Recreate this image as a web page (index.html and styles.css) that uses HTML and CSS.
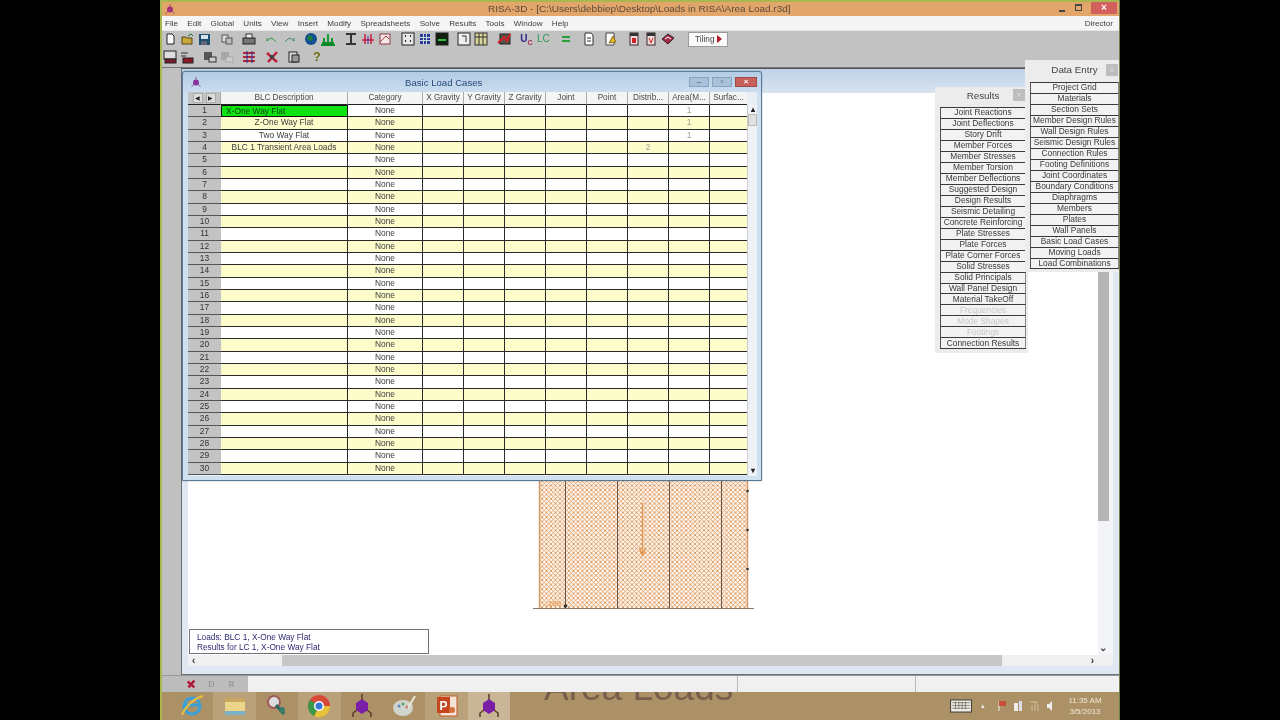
FILE: index.html
```html
<!DOCTYPE html>
<html lang="en">
<head>
<meta charset="utf-8">
<title>RISA-3D</title>
<link rel="stylesheet" href="styles.css">
</head>
<body>
<div class="screen">
  <header class="titlebar">
    <svg class="app-icon" viewBox="0 0 12 12"><circle cx="6" cy="6.5" r="3" fill="#a3307a"/><path d="M6 1v3M1.500 11l2.500-3M10.500 11l-2.500-3" stroke="#a3506a" fill="none"/></svg>
    <span class="title-text">RISA-3D - [C:\Users\debbiep\Desktop\Loads in RISA\Area Load.r3d]</span>
    <div class="win-controls">
      <span class="wc-min"></span>
      <span class="wc-max"></span>
      <span class="wc-close">×</span>
    </div>
  </header>

  <nav class="menubar">
    <span>File</span><span>Edit</span><span>Global</span><span>Units</span><span>View</span><span>Insert</span><span>Modify</span><span>Spreadsheets</span><span>Solve</span><span>Results</span><span>Tools</span><span>Window</span><span>Help</span>
    <span class="menu-right">Director</span>
  </nav>

  <div class="toolbar">
    <div class="tb-group">
      <svg viewBox="0 0 16 16"><path d="M5 3h5l2 2v8H5z" fill="#fff" stroke="#222"/></svg>
      <svg viewBox="0 0 16 16"><path d="M3 6h4l1 1h5v6H3z" fill="#c8a83c" stroke="#54431a"/><path d="M9 5l3-2 2 2" stroke="#1a6a2a" fill="none"/></svg>
      <svg viewBox="0 0 16 16"><rect x="3" y="3" width="11" height="11" fill="#1f4f6f"/><rect x="5" y="4" width="7" height="4" fill="#d8e4e8"/><rect x="5" y="10" width="6" height="4" fill="#667"/></svg>
    </div>
    <div class="tb-group">
      <svg viewBox="0 0 16 16"><rect x="3" y="4" width="6" height="7" fill="#ddd" stroke="#555"/><rect x="7" y="7" width="6" height="6" fill="#bbb" stroke="#555"/></svg>
    </div>
    <div class="tb-group">
      <svg viewBox="0 0 16 16"><rect x="2" y="7" width="12" height="6" fill="#777" stroke="#222"/><rect x="5" y="3" width="6" height="4" fill="#eee" stroke="#333"/></svg>
    </div>
    <div class="tb-group">
      <svg viewBox="0 0 16 16"><path d="M3 10l4-3 2 1 3 3M3 10V7" stroke="#2f9a3f" fill="none"/></svg>
      <svg viewBox="0 0 16 16"><path d="M13 10L9 7 7 8l-3 3M13 10V7" stroke="#3a8a6a" fill="none"/></svg>
    </div>
    <div class="tb-group">
      <svg viewBox="0 0 16 16"><circle cx="8" cy="8" r="6" fill="#134f94"/><path d="M5 4l4 1 1 4-3 1-3-2z" fill="#1d7a3a"/></svg>
      <svg viewBox="0 0 16 16"><path d="M1 14h14M2 12h12" stroke="#0c8a25" stroke-width="2"/><rect x="3" y="7" width="2" height="4" fill="#149a30"/><rect x="7" y="3" width="2" height="8" fill="#149a30"/><rect x="11" y="7" width="2" height="4" fill="#149a30"/></svg>
    </div>
    <div class="tb-group">
      <svg viewBox="0 0 16 16"><path d="M3 3h10M8 3v9M3 13h10" stroke="#333" stroke-width="2" fill="none"/></svg>
      <svg viewBox="0 0 16 16"><path d="M2 9h12M5 3v10M11 3v10" stroke="#c21f3f" stroke-width="1.500" fill="none"/><path d="M8 5v8" stroke="#4a2a9a"/></svg>
      <svg viewBox="0 0 16 16"><rect x="3" y="3" width="10" height="10" fill="#f4e8e8" stroke="#8a3a4a"/><path d="M3 11l6-6 3 3" stroke="#a33" fill="none"/></svg>
    </div>
    <div class="tb-group">
      <svg viewBox="0 0 16 16"><rect x="2" y="2" width="12" height="12" fill="#e8e8e8" stroke="#222"/><path d="M5 5h1M10 5h1M5 10h1M10 10h1" stroke="#222" stroke-width="2"/></svg>
      <svg viewBox="0 0 16 16"><rect x="3" y="3" width="10" height="10" fill="#2a3a9a"/><path d="M6.500 3v10M9.500 3v10M3 6.500h10M3 9.500h10" stroke="#cdd"/></svg>
      <svg viewBox="0 0 16 16"><rect x="2" y="2" width="12" height="12" fill="#102010" stroke="#222"/><path d="M4 9h8" stroke="#2fbf3f" stroke-width="2"/></svg>
    </div>
    <div class="tb-group">
      <svg viewBox="0 0 16 16"><rect x="2" y="2" width="12" height="12" fill="#eee" stroke="#222"/><path d="M6 5h4v6" stroke="#333" fill="none"/></svg>
      <svg viewBox="0 0 16 16"><rect x="2" y="2" width="12" height="12" fill="#d8d49a" stroke="#333"/><path d="M6 2v12M10 2v12M2 6h12" stroke="#333"/></svg>
    </div>
    <div class="tb-group">
      <svg viewBox="0 0 16 16"><rect x="4" y="3" width="10" height="10" fill="#554" stroke="#222"/><path d="M2 12l6-6 3 4 3-7" stroke="#d81e2a" stroke-width="2" fill="none"/></svg>
    </div>
    <div class="tb-group">
      <span class="tb-text tb-uc">U<sub>C</sub></span>
      <span class="tb-text tb-lc">LC</span>
    </div>
    <div class="tb-group">
      <svg viewBox="0 0 16 16"><path d="M4 6h8M4 10h8" stroke="#28a03a" stroke-width="2"/></svg>
    </div>
    <div class="tb-group">
      <svg viewBox="0 0 16 16"><path d="M4 2h6l2 2v10H4z" fill="#fff" stroke="#333"/><path d="M6 7h4M6 10h4" stroke="#333"/></svg>
    </div>
    <div class="tb-group">
      <svg viewBox="0 0 16 16"><path d="M3 2h8v12H3z" fill="#fff" stroke="#444"/><path d="M6 12l4-7 3 6z" fill="#e2b92a" stroke="#8a6a1a"/></svg>
    </div>
    <div class="tb-group">
      <svg viewBox="0 0 16 16"><rect x="4" y="2" width="8" height="12" fill="#f4dcdc" stroke="#3a2a2a"/><rect x="4" y="2" width="8" height="3" fill="#333"/><rect x="6" y="7" width="4" height="5" fill="#c22"/></svg>
      <svg viewBox="0 0 16 16"><rect x="4" y="2" width="8" height="12" fill="#f4dcdc" stroke="#3a2a2a"/><rect x="4" y="2" width="8" height="3" fill="#333"/><path d="M6 7l2 5 2-5" stroke="#c22" fill="none"/></svg>
      <svg viewBox="0 0 16 16"><path d="M2 8l6-5 6 4-6 6z" fill="#a32a4a" stroke="#322"/><path d="M5 8l3-2 3 2" stroke="#fff" fill="none"/></svg>
    </div>
    <button class="tiling">Tiling <i class="tiling-arrow"></i></button>
  </div>

  <div class="toolbar toolbar-second">
    <div class="tb-group">
      <svg viewBox="0 0 16 16"><rect x="2" y="2" width="12" height="8" fill="#ddd" stroke="#222"/><rect x="3" y="10" width="11" height="4" fill="#7a1a2a" stroke="#222"/></svg>
      <svg viewBox="0 0 16 16"><path d="M2 4h7M2 7h5" stroke="#333"/><rect x="4" y="9" width="10" height="5" fill="#8a1a2a" stroke="#222"/></svg>
    </div>
    <div class="tb-group">
      <svg viewBox="0 0 16 16"><rect x="2" y="3" width="8" height="8" fill="#555"/><rect x="7" y="8" width="7" height="5" fill="#ccc" stroke="#333"/></svg>
      <svg viewBox="0 0 16 16" class="tb-dim"><rect x="2" y="3" width="8" height="8" fill="#888"/><rect x="7" y="8" width="7" height="5" fill="#ddd" stroke="#888"/></svg>
    </div>
    <div class="tb-group">
      <svg viewBox="0 0 16 16"><path d="M2 4h12M2 8h12M2 12h12" stroke="#b02a3a" stroke-width="2"/><path d="M6 2v12M11 2v12" stroke="#2a2a9a"/></svg>
    </div>
    <div class="tb-group">
      <svg viewBox="0 0 16 16"><path d="M3 4l10 9M13 3L4 13" stroke="#c01f3a" stroke-width="2.500"/><rect x="6" y="6" width="4" height="4" fill="#444"/></svg>
    </div>
    <div class="tb-group">
      <svg viewBox="0 0 16 16"><rect x="3" y="3" width="8" height="10" fill="#ddd" stroke="#222"/><rect x="6" y="6" width="7" height="7" fill="#999" stroke="#222"/></svg>
    </div>
    <div class="tb-group">
      <span class="tb-text tb-help">?</span>
    </div>
  </div>

  <main class="workspace">
    <section class="drawing-win">
      <div class="drawing-head"></div>
      <div class="drawing-body">
        <svg class="drawing" viewBox="0 0 230 140" width="230" height="140">
          <defs>
            <pattern id="hatch" width="4.500" height="4.500" patternUnits="userSpaceOnUse">
              <path d="M0 0l4.500 4.500M4.500 0L0 4.500" stroke="#dd9a62" stroke-width=".9"/>
            </pattern>
          </defs>
          <rect x="6" y="0" width="209" height="127" fill="#fdf6ee"/>
          <rect x="6" y="0" width="209" height="127" fill="url(#hatch)"/>
          <path d="M6.500 0v127M214.500 0v127" stroke="#d49a6a" stroke-width="1.500"/>
          <path d="M32.500 0v127M84.500 0v127M136.500 0v127M188.500 0v127" stroke="#6a5444"/>
          <path d="M0 127.500h221" stroke="#8a7a6a"/>
          <path d="M109.500 22v52M109.500 75l-3-8M109.500 75l3-8" stroke="#e09a55" stroke-width="1.500" fill="none"/>
          <circle cx="214.500" cy="10" r="1.300" fill="#333"/><circle cx="214.500" cy="49" r="1.300" fill="#333"/><circle cx="214.500" cy="88" r="1.300" fill="#333"/>
          <circle cx="32.500" cy="125" r="1.800" fill="#333"/>
          <text x="10" y="125" class="drawing-label">-.100</text>
        </svg>
        <div class="legend">
          <div>Loads: BLC 1, X-One Way Flat</div>
          <div>Results for LC 1, X-One Way Flat</div>
        </div>
        <div class="vscroll"><i class="vthumb"></i><b class="varrow">⌄</b></div>
      </div>
      <div class="hscroll"><b>‹</b><i class="hthumb"></i><b>›</b></div>
    </section>

    <section class="sheet-win">
      <div class="sheet-title">
        <svg class="app-icon" viewBox="0 0 12 12"><circle cx="6" cy="6.500" r="3" fill="#8a30a0"/><path d="M6 1v3M1.500 11l2.500-3M10.500 11l-2.500-3" stroke="#8a5aa0" fill="none"/></svg>
        <span class="sheet-name">Basic Load Cases</span>
        <div class="sheet-controls"><span class="sc">–</span><span class="sc">▫</span><span class="sc sc-close">×</span></div>
      </div>
      <div class="sheet-content">
        <div class="sheet-grid">
          <div class="row row-head">
            <span class="nav"><i class="nav-btn">◀</i><i class="nav-btn">▶</i></span><span>BLC Description</span><span>Category</span><span>X Gravity</span><span>Y Gravity</span><span>Z Gravity</span><span>Joint</span><span>Point</span><span>Distrib...</span><span>Area(M...</span><span>Surfac...</span>
          </div>
          <div class="row"><span class="num">1</span><span class="current">X-One Way Flat</span><span>None</span><span></span><span></span><span></span><span></span><span></span><span></span><span class="dim">1</span><span></span></div>
          <div class="row"><span class="num">2</span><span>Z-One Way Flat</span><span>None</span><span></span><span></span><span></span><span></span><span></span><span></span><span class="dim">1</span><span></span></div>
          <div class="row"><span class="num">3</span><span>Two Way Flat</span><span>None</span><span></span><span></span><span></span><span></span><span></span><span></span><span class="dim">1</span><span></span></div>
          <div class="row"><span class="num">4</span><span>BLC 1 Transient Area Loads</span><span>None</span><span></span><span></span><span></span><span></span><span></span><span class="dim">2</span><span></span><span></span></div>
          <div class="row"><span class="num">5</span><span></span><span>None</span><span></span><span></span><span></span><span></span><span></span><span></span><span></span><span></span></div>
          <div class="row"><span class="num">6</span><span></span><span>None</span><span></span><span></span><span></span><span></span><span></span><span></span><span></span><span></span></div>
          <div class="row"><span class="num">7</span><span></span><span>None</span><span></span><span></span><span></span><span></span><span></span><span></span><span></span><span></span></div>
          <div class="row"><span class="num">8</span><span></span><span>None</span><span></span><span></span><span></span><span></span><span></span><span></span><span></span><span></span></div>
          <div class="row"><span class="num">9</span><span></span><span>None</span><span></span><span></span><span></span><span></span><span></span><span></span><span></span><span></span></div>
          <div class="row"><span class="num">10</span><span></span><span>None</span><span></span><span></span><span></span><span></span><span></span><span></span><span></span><span></span></div>
          <div class="row"><span class="num">11</span><span></span><span>None</span><span></span><span></span><span></span><span></span><span></span><span></span><span></span><span></span></div>
          <div class="row"><span class="num">12</span><span></span><span>None</span><span></span><span></span><span></span><span></span><span></span><span></span><span></span><span></span></div>
          <div class="row"><span class="num">13</span><span></span><span>None</span><span></span><span></span><span></span><span></span><span></span><span></span><span></span><span></span></div>
          <div class="row"><span class="num">14</span><span></span><span>None</span><span></span><span></span><span></span><span></span><span></span><span></span><span></span><span></span></div>
          <div class="row"><span class="num">15</span><span></span><span>None</span><span></span><span></span><span></span><span></span><span></span><span></span><span></span><span></span></div>
          <div class="row"><span class="num">16</span><span></span><span>None</span><span></span><span></span><span></span><span></span><span></span><span></span><span></span><span></span></div>
          <div class="row"><span class="num">17</span><span></span><span>None</span><span></span><span></span><span></span><span></span><span></span><span></span><span></span><span></span></div>
          <div class="row"><span class="num">18</span><span></span><span>None</span><span></span><span></span><span></span><span></span><span></span><span></span><span></span><span></span></div>
          <div class="row"><span class="num">19</span><span></span><span>None</span><span></span><span></span><span></span><span></span><span></span><span></span><span></span><span></span></div>
          <div class="row"><span class="num">20</span><span></span><span>None</span><span></span><span></span><span></span><span></span><span></span><span></span><span></span><span></span></div>
          <div class="row"><span class="num">21</span><span></span><span>None</span><span></span><span></span><span></span><span></span><span></span><span></span><span></span><span></span></div>
          <div class="row"><span class="num">22</span><span></span><span>None</span><span></span><span></span><span></span><span></span><span></span><span></span><span></span><span></span></div>
          <div class="row"><span class="num">23</span><span></span><span>None</span><span></span><span></span><span></span><span></span><span></span><span></span><span></span><span></span></div>
          <div class="row"><span class="num">24</span><span></span><span>None</span><span></span><span></span><span></span><span></span><span></span><span></span><span></span><span></span></div>
          <div class="row"><span class="num">25</span><span></span><span>None</span><span></span><span></span><span></span><span></span><span></span><span></span><span></span><span></span></div>
          <div class="row"><span class="num">26</span><span></span><span>None</span><span></span><span></span><span></span><span></span><span></span><span></span><span></span><span></span></div>
          <div class="row"><span class="num">27</span><span></span><span>None</span><span></span><span></span><span></span><span></span><span></span><span></span><span></span><span></span></div>
          <div class="row"><span class="num">28</span><span></span><span>None</span><span></span><span></span><span></span><span></span><span></span><span></span><span></span><span></span></div>
          <div class="row"><span class="num">29</span><span></span><span>None</span><span></span><span></span><span></span><span></span><span></span><span></span><span></span><span></span></div>
          <div class="row"><span class="num">30</span><span></span><span>None</span><span></span><span></span><span></span><span></span><span></span><span></span><span></span><span></span></div>
        </div>
        <div class="sheet-scroll"><b class="s-arrow s-up">▴</b><i class="s-thumb"></i><b class="s-arrow s-down">▾</b></div>
      </div>
    </section>

    <aside class="panel panel-results">
      <div class="panel-head"><span>Results</span><i class="panel-x">×</i></div>
      <div class="panel-list">
        <button>Joint Reactions</button><button>Joint Deflections</button><button>Story Drift</button><button>Member Forces</button><button>Member Stresses</button><button>Member Torsion</button><button>Member Deflections</button><button>Suggested Design</button><button>Design Results</button><button>Seismic Detailing</button><button>Concrete Reinforcing</button><button>Plate Stresses</button><button>Plate Forces</button><button>Plate Corner Forces</button><button>Solid Stresses</button><button>Solid Principals</button><button>Wall Panel Design</button><button>Material TakeOff</button><button class="off">Frequencies</button><button class="off">Mode Shapes</button><button class="off">Footings</button><button>Connection Results</button>
      </div>
    </aside>

    <aside class="panel panel-entry">
      <div class="panel-head"><span>Data Entry</span><i class="panel-x">×</i></div>
      <div class="panel-list">
        <button>Project Grid</button><button>Materials</button><button>Section Sets</button><button>Member Design Rules</button><button>Wall Design Rules</button><button>Seismic Design Rules</button><button>Connection Rules</button><button>Footing Definitions</button><button>Joint Coordinates</button><button>Boundary Conditions</button><button>Diaphragms</button><button>Members</button><button>Plates</button><button>Wall Panels</button><button>Basic Load Cases</button><button>Moving Loads</button><button>Load Combinations</button>
      </div>
    </aside>
  </main>

  <footer class="statusbar">
    <div class="status-modes">
      <svg viewBox="0 0 12 12" class="status-icon"><path d="M2 3l8 7M10 2L3 10" stroke="#b01a3a" stroke-width="3"/></svg>
      <span>D</span><span>R</span>
    </div>
    <div class="status-cell status-a"></div>
    <div class="status-cell status-b"></div>
    <div class="status-cell status-c"></div>
  </footer>

  <div class="taskbar">
    <span class="wallpaper-text">Area Loads</span>
    <div class="task-items">
      <div class="task"><svg viewBox="0 0 26 26"><circle cx="13" cy="13" r="8" fill="none" stroke="#3aa0d8" stroke-width="3"/><path d="M6 12h14" stroke="#3aa0d8" stroke-width="3"/><path d="M3 22C6 14 14 6 24 3" stroke="#e8c040" stroke-width="2" fill="none"/></svg></div>
      <div class="task lit"><svg viewBox="0 0 26 26"><rect x="3" y="5" width="20" height="6" fill="#c8a860"/><rect x="3" y="9" width="20" height="13" fill="#ecd58a"/><rect x="3" y="18" width="20" height="4" fill="#7ab0c8"/></svg></div>
      <div class="task"><svg viewBox="0 0 26 26"><circle cx="10" cy="9" r="6" fill="#ddd" stroke="#a05a5a" stroke-width="2"/><path d="M12 12l8 9" stroke="#2a6a5a" stroke-width="3"/><circle cx="18" cy="17" r="3" fill="#3a7a6a"/></svg></div>
      <div class="task lit"><svg viewBox="0 0 26 26"><circle cx="13" cy="13" r="11" fill="#d84a38"/><path d="M13 13L24 13A11 11 0 0 1 8 23Z" fill="#e8c33a"/><path d="M13 13L8 23A11 11 0 0 1 4 7Z" fill="#3a9a4a"/><circle cx="13" cy="13" r="5" fill="#fff"/><circle cx="13" cy="13" r="3.500" fill="#3a78d8"/></svg></div>
      <div class="task"><svg viewBox="0 0 26 26"><path d="M13 1v6M4 24v-4l4-3M22 24v-4l-4-3" stroke="#5a3a2a" stroke-width="1.500" fill="none"/><path d="M13 6l6 4v7l-6 4-6-4v-7z" fill="#7a1ea8"/></svg></div>
      <div class="task"><svg viewBox="0 0 26 26"><ellipse cx="12" cy="15" rx="10" ry="8" fill="#d0d4cc"/><circle cx="8" cy="13" r="1.500" fill="#5a8ac0"/><circle cx="12" cy="11" r="1.500" fill="#5aa070"/><circle cx="16" cy="14" r="1.500" fill="#c06a5a"/><path d="M17 15L24 3" stroke="#e8e8d8" stroke-width="2"/></svg></div>
      <div class="task lit"><svg viewBox="0 0 26 26"><rect x="6" y="3" width="17" height="20" fill="#f4e4d8" stroke="#c05a2a"/><rect x="3" y="4" width="13" height="16" fill="#c8461e"/><text x="9.500" y="17" class="ppt-letter">P</text><circle cx="18" cy="17" r="3" fill="#d8703a"/></svg></div>
      <div class="task active"><svg viewBox="0 0 26 26"><path d="M13 1v6M4 24v-4l4-3M22 24v-4l-4-3" stroke="#5a3a2a" stroke-width="1.500" fill="none"/><path d="M13 6l6 4v7l-6 4-6-4v-7z" fill="#7a1ea8"/></svg></div>
    </div>
    <div class="tray">
      <svg class="tray-kbd" viewBox="0 0 20 12"><rect x=".5" y=".5" width="19" height="11" fill="#f2eee2" stroke="#444"/><path d="M2 3h16M2 5.500h16M2 8h16M5 2v7M8 2v7M11 2v7M14 2v7" stroke="#666" stroke-width=".7"/></svg>
      <span class="tray-up">▴</span>
      <svg class="tray-ico" viewBox="0 0 10 12"><path d="M2 1v10" stroke="#eee"/><path d="M2 1h7v5H2z" fill="#c8503a"/></svg>
      <svg class="tray-ico" viewBox="0 0 10 12"><rect x="1" y="3" width="4" height="8" fill="#eee"/><rect x="6" y="1" width="3" height="10" fill="#dde"/></svg>
      <svg class="tray-ico" viewBox="0 0 10 12"><path d="M1 2h8M3 11V5M6 11V2M9 11V4" stroke="#cdbfa0"/></svg>
      <svg class="tray-ico" viewBox="0 0 10 12"><path d="M2 4h2l3-3v10L4 8H2z" fill="#eee"/></svg>
      <div class="clock"><div>11:35 AM</div><div>3/5/2013</div></div>
    </div>
  </div>
</div>
</body>
</html>
```

FILE: styles.css
```css
* { box-sizing: border-box; }
html, body { margin: 0; height: 100%; background: #000; overflow: hidden; }
body { display: flex; justify-content: center; font-family: "Liberation Sans", Arial, sans-serif; }

.screen {
  width: 960px; height: 720px; display: flex; flex-direction: column;
  position: relative; overflow: hidden; background: #c0c0c0;
  border-left: 2px solid #a9b84e; border-right: 1px solid #6f7f50;
  filter: blur(.35px);
}

.titlebar {
  height: 16px; flex: none; display: flex; align-items: center; position: relative;
  background: #e2a66a;
  border-top: 2px solid #a9b84e;
}
.app-icon { width: 12px; height: 12px; margin-left: 2px; flex: none; }
.title-text { position: absolute; left: 326px; top: 0; font-size: 9.97px; line-height: 13px; color: #5c4a3c; white-space: nowrap; }
.win-controls { margin-left: auto; display: flex; align-items: center; height: 14px; }
.wc-min { width: 6px; height: 2px; background: #444; margin-right: 10px; margin-top: 3px; }
.wc-max { width: 7px; height: 7px; border: 1px solid #444; border-top-width: 2px; margin-right: 9px; margin-top: -4px; }
.wc-close { width: 26px; height: 12px; margin-right: 2px; margin-top: -2px; background: #d2605c; color: #fff; font-size: 10px; line-height: 11px; text-align: center; font-weight: bold; }

.menubar {
  height: 14px; flex: none; display: flex; align-items: center; gap: 9.3px;
  padding: 0 6px 0 3px; background: #f5f5f5; font-size: 8.1px; color: #3c3c3c;
}
.menu-right { margin-left: auto; }

.toolbar {
  height: 17px; flex: none; display: flex; align-items: center; gap: 6.6px; padding-left: 0;
  background: #c2c2c2; border-top: 1px solid #e6e6e6;
}
.toolbar-second { height: 21px; border-top: 0; padding-bottom: 0; border-bottom: 1px solid #777; }
.tb-group { display: flex; gap: 1px; }
.tb-group svg { width: 16px; height: 16px; display: block; }
.tb-dim { opacity: .45; }
.tb-text { width: 16px; text-align: center; font-size: 10px; line-height: 16px; display: block; }
.tb-uc { color: #2a2a8a; font-weight: bold; }
.tb-uc sub { font-size: 7px; line-height: 0; color: #a02a4a; }
.tb-lc { color: #2d9a5a; }
.tb-help { color: #6a6a10; font-weight: bold; font-size: 12px; }
.tiling {
  width: 40px; height: 15px; margin-left: 6px; padding: 0; border: 1px solid #9a9a9a; background: #fafafa;
  font: 8.3px "Liberation Sans", Arial, sans-serif; color: #444;
  display: flex; align-items: center; justify-content: center; gap: 2px;
}
.tiling-arrow { width: 0; height: 0; border-left: 5px solid #b01a2a; border-top: 4px solid transparent; border-bottom: 4px solid transparent; }

.workspace { flex: 1; position: relative; background: #c0c0c0; }

.drawing-win {
  position: absolute; left: 19px; top: 0; right: 0; height: 607px;
  display: flex; flex-direction: column;
  background: #dfe8f2; border: 1px solid #6a7078; border-right: 0; border-top-color: #555;
  padding: 0 6px 8px 6px;
}
.drawing-head { height: 24px; flex: none; background: linear-gradient(#bed3e8, #d8e4f0); margin: 0 -6px; }
.drawing-body { flex: 1; position: relative; background: #fff; overflow: hidden; }
.drawing { position: absolute; left: 345px; top: 388px; }
.drawing-label { font: bold 8px "Liberation Sans", Arial, sans-serif; fill: #eaa058; }
.legend {
  position: absolute; left: 1px; bottom: 1px; width: 240px; height: 25px; padding: 2px 0 0 7px;
  background: #fff; border: 1px solid #70707a; font-size: 8.3px; line-height: 10px; color: #2e2a70;
}
.vscroll { position: absolute; right: 0; top: 0; bottom: 0; width: 15px; background: #f2f4f7; }
.vthumb { position: absolute; left: 0; top: 178px; width: 11px; height: 250px; background: #b6b4b4; }
.varrow { position: absolute; left: 1px; bottom: 2px; font-size: 10px; line-height: 10px; color: #444; }
.hscroll {
  height: 11px; flex: none; display: flex; align-items: center; position: relative; background: #f0f0f0;
  font-size: 10px; line-height: 10px; color: #333;
}
.hscroll b:first-child { margin-left: 4px; }
.hscroll b:last-child { margin-left: auto; margin-right: 19px; }
.hthumb { position: absolute; left: 94px; width: 720px; top: 0; bottom: 0; background: #c7c7c7; }

.sheet-win {
  position: absolute; left: 20px; top: 3px; width: 580px; height: 410px;
  background: linear-gradient(#b4cce6, #cfe0f0 24px); border: 1px solid #5a7a9a; border-radius: 3px 3px 0 0;
  box-shadow: 0 0 1px #345; padding: 0 4px 4px 5px; display: flex; flex-direction: column;
}
.sheet-title { height: 20px; flex: none; position: relative; display: flex; align-items: center; }
.sheet-name { position: absolute; left: 217px; top: 4px; font-size: 9.6px; line-height: 13px; color: #274a78; }
.sheet-controls { margin-left: auto; display: flex; gap: 3px; margin-top: -1px; }
.sc { width: 20px; height: 10px; background: #a9c2dc; border: 1px solid #8aa4c0; font-size: 8px; line-height: 8px; color: #345; text-align: center; }
.sc-close { width: 22px; background: #c8605c; border-color: #a04a48; color: #fff; font-weight: bold; }
.sheet-content { flex: 1; display: flex; background: #e8eef4; position: relative; }
.sheet-grid { flex: none; width: 559px; display: flex; flex-direction: column; }
.row {
  display: grid; grid-template-columns: 33px 127px 75px repeat(7, 41px) 37px;
  height: 12.33px; font-size: 8.4px; line-height: 11px; color: #3c3c3c; text-align: center;
  background: #fff;
}
.row:nth-child(odd) { background: #fdfccb; }
.row > span { border-right: 1px solid #2a2a2a; border-bottom: 1px solid #2a2a2a; white-space: nowrap; overflow: hidden; min-width: 0; }
.row > span:last-child { border-right: 0; }
.row > .num { background: #c3c3c3; border-right: 0; border-bottom: 1px solid #555; color: #333; }
.row > .current { background: #0fe30f; text-align: left; padding-left: 4px; color: #0e3a10; border: 1px solid #111; line-height: 10px; }
.dim { color: #a0a08a; }
.row-head { height: 13px; background: #f4f4f4; color: #4a4a4a; font-size: 8.2px; }
.row-head:nth-child(odd) { background: #f4f4f4; }
.row-head > span { border-right: 1px solid #aaa; border-bottom: 1px solid #222; }
.nav { background: #c3c3c3; display: flex; justify-content: center; gap: 3px; padding-top: 1px; }
.nav-btn { width: 10px; height: 10px; background: #ddd; border: 1px solid #aaa; font-size: 6px; line-height: 8px; font-style: normal; color: #222; }
.sheet-scroll { flex: 1; position: relative; background: #eef2f6; border-left: 1px solid #ccc; margin-top: 13px; }
.s-arrow { position: absolute; left: 0; right: 0; text-align: center; font-size: 8px; line-height: 8px; color: #222; }
.s-up { top: 1px; }
.s-down { bottom: 1px; }
.s-thumb { position: absolute; left: 0; right: 0; top: 9px; height: 12px; background: #e0e0e0; border: 1px solid #bbb; }

.panel { position: absolute; background: #ececec; display: flex; flex-direction: column; }
.panel-results { left: 773px; top: 19px; width: 93px; height: 266px; padding: 0 2px 0 5px; }
.panel-entry { left: 863px; top: -8px; width: 94px; height: 212px; padding: 0 0 0 5px; }
.panel-head { flex: none; height: 20px; position: relative; text-align: center; font-size: 9.8px; line-height: 18px; color: #444; }
.panel-results .panel-head { padding-right: 0; }
.panel-entry .panel-head { padding-right: 0; height: 22px; line-height: 20px; }
.panel-x { position: absolute; right: 1px; top: 2px; width: 12px; height: 12px; background: #bdbdbd; color: #ddd; font-size: 9px; line-height: 12px; font-style: normal; }
.panel-entry .panel-x { top: 4px; right: 1px; }
.panel-list { display: flex; flex-direction: column; }
.panel-list button {
  height: 10.98px; padding: 0; margin: 0; flex: none; background: #f2f2f2;
  border: 0; border-top: 1px solid #3a3a3a; border-left: 1px solid #555; border-right: 1px solid #888;
  font: 8.4px/9px "Liberation Sans", Arial, sans-serif; color: #3a3a3a; white-space: nowrap; overflow: hidden;
}
.panel-list { border-bottom: 1px solid #3a3a3a; }
.panel-list .off { color: #c8c8c8; }

.statusbar { height: 17px; flex: none; display: flex; background: #f0f0f0; border-top: 1px solid #999; }
.status-modes { width: 86px; background: #bcbcbc; display: flex; align-items: center; gap: 14px; padding-left: 24px; font: 9px "Liberation Serif", serif; color: #8a8a8a; }
.status-icon { width: 10px; height: 10px; flex: none; margin-right: -2px; }
.status-cell { border-right: 1px solid #bbb; }
.status-a { width: 490px; }
.status-b { width: 178px; }
.status-c { flex: 1; border-right: 0; }

.taskbar { height: 28px; flex: none; background: #ac9166; position: relative; display: flex; align-items: center; overflow: hidden; }
.wallpaper-text { position: absolute; left: 382px; top: -27px; font-size: 37px; line-height: 46px; color: #765e4a; white-space: nowrap; }
.task-items { display: flex; position: relative; padding-left: 9px; height: 28px; }
.task { width: 42.400px; height: 28px; display: flex; align-items: center; justify-content: center; }
.task svg { width: 26px; height: 26px; }
.task.lit { background: #b9a27a; margin-right: 0; }
.task.active { background: #c9b696; }
.ppt-letter { font: bold 12px "Liberation Sans", Arial, sans-serif; fill: #fff; text-anchor: middle; }
.tray { margin-left: auto; display: flex; align-items: center; gap: 6px; padding-right: 11px; position: relative; }
.tray-kbd { width: 22px; height: 14px; margin-right: 3px; }
.tray-up { font-size: 7px; color: #eee; margin-right: 6px; }
.tray-ico { width: 10px; height: 12px; }
.clock { width: 46px; margin-left: 1px; text-align: center; font-size: 8px; line-height: 11px; color: #efe6d6; }
```
